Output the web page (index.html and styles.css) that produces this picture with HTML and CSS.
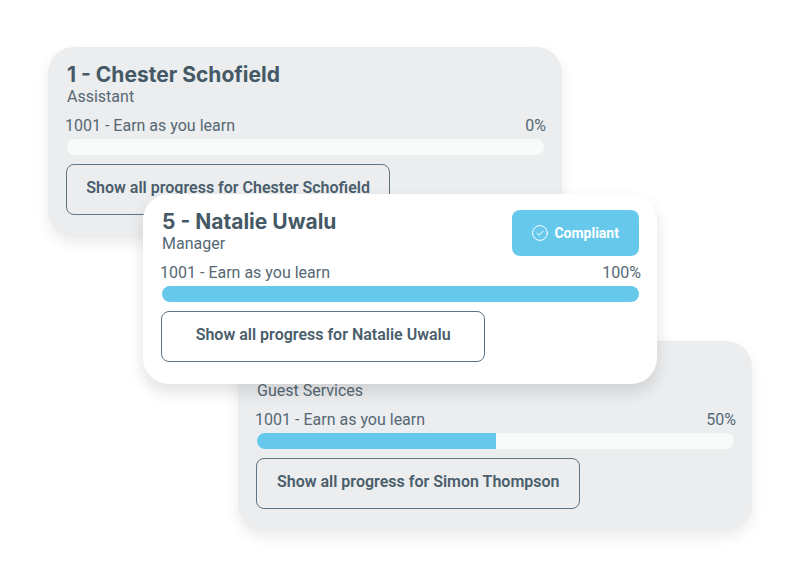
FILE: index.html
```html
<!DOCTYPE html>
<html lang="en">
<head>
<meta charset="utf-8">
<meta name="viewport" content="width=device-width, initial-scale=1">
<title>Team progress</title>
<link rel="stylesheet" href="styles.css">
</head>
<body>
<main class="stack">
  <article class="card">
    <header class="card-head">
      <div>
        <h2 class="name">1 - Chester Schofield</h2>
        <p class="role">Assistant</p>
      </div>
    </header>
    <div class="course">
      <label for="progress-1">1001 - Earn as you learn</label>
      <span>0%</span>
    </div>
    <progress class="bar" id="progress-1" value="0" max="100"></progress>
    <button class="show-all" type="button">Show all progress for Chester Schofield</button>
  </article>

  <article class="card card-front">
    <header class="card-head">
      <div>
        <h2 class="name">5 - Natalie Uwalu</h2>
        <p class="role">Manager</p>
      </div>
      <span class="badge">
        <svg class="badge-icon" viewBox="0 0 16 16" aria-hidden="true">
          <circle cx="8" cy="8" r="7.4"/>
          <path d="M5 8.2 7.2 10.2 11 6.2"/>
        </svg>
        Compliant
      </span>
    </header>
    <div class="course">
      <label for="progress-2">1001 - Earn as you learn</label>
      <span>100%</span>
    </div>
    <progress class="bar" id="progress-2" value="100" max="100"></progress>
    <button class="show-all" type="button">Show all progress for Natalie Uwalu</button>
  </article>

  <article class="card card-last">
    <header class="card-head">
      <div>
        <h2 class="name">Simon Thompson</h2>
        <p class="role">Guest Services</p>
      </div>
    </header>
    <div class="course">
      <label for="progress-3">1001 - Earn as you learn</label>
      <span>50%</span>
    </div>
    <progress class="bar" id="progress-3" value="50" max="100"></progress>
    <button class="show-all" type="button">Show all progress for Simon Thompson</button>
  </article>
</main>
</body>
</html>
```

FILE: styles.css
```css
* {
  box-sizing: border-box;
}

body {
  margin: 0;
  background: #fff;
  color: #566874;
  font: 16px/20px Roboto, "Liberation Sans", sans-serif;
}

.stack {
  display: flex;
  flex-direction: column;
  align-items: center;
  padding: 47px 48px 40px;
}

/* Each card overlaps the one above it */
.card {
  width: 73%;
  padding: 16px 18px 22px 19px;
  border-radius: 26px;
  background: #ebedef;
  box-shadow: 0 6px 14px rgba(0, 0, 0, 0.08);
}

.card + .card {
  margin-top: -43px;
}

.card:first-child {
  align-self: flex-start;
}

.card-front {
  z-index: 1;
  background: #fff;
  box-shadow: 0 8px 16px rgba(0, 0, 0, 0.12);
}

.card-last {
  align-self: flex-end;
}

.card-head {
  display: flex;
  justify-content: space-between;
  height: 46px;
}

.name {
  margin: 0;
  color: #445965;
  font: 700 21px/24px Inter, "Liberation Sans", sans-serif;
}

.role {
  margin: 0;
}

.badge {
  display: flex;
  align-items: center;
  gap: 6px;
  padding: 0 20px;
  border-radius: 8px;
  background: #66c9ec;
  color: #fff;
  font-size: 14px;
  font-weight: 700;
}

.badge-icon {
  width: 16px;
  height: 16px;
  fill: none;
  stroke: #fff;
  stroke-width: 1;
  stroke-linecap: round;
  stroke-linejoin: round;
}

.course {
  display: flex;
  justify-content: space-between;
  margin: 7px -2px 3px;
}

.bar {
  display: block;
  width: 100%;
  height: 16px;
  border: 0;
  border-radius: 8px;
  overflow: hidden;
  appearance: none;
  background: #f9fbfb;
}

.bar::-webkit-progress-bar {
  background: #f9fbfb;
}

.bar::-webkit-progress-value {
  background: #66c9ec;
}

.bar::-moz-progress-bar {
  background: #66c9ec;
}

.show-all {
  display: block;
  width: 68%;
  height: 51px;
  margin: 9px 0 0 -1px;
  padding: 0 8px 4px;
  border: 1px solid #5f7482;
  border-radius: 8px;
  background: transparent;
  color: #4a5e6b;
  font: 600 16px/20px Roboto, "Liberation Sans", sans-serif;
}
```
